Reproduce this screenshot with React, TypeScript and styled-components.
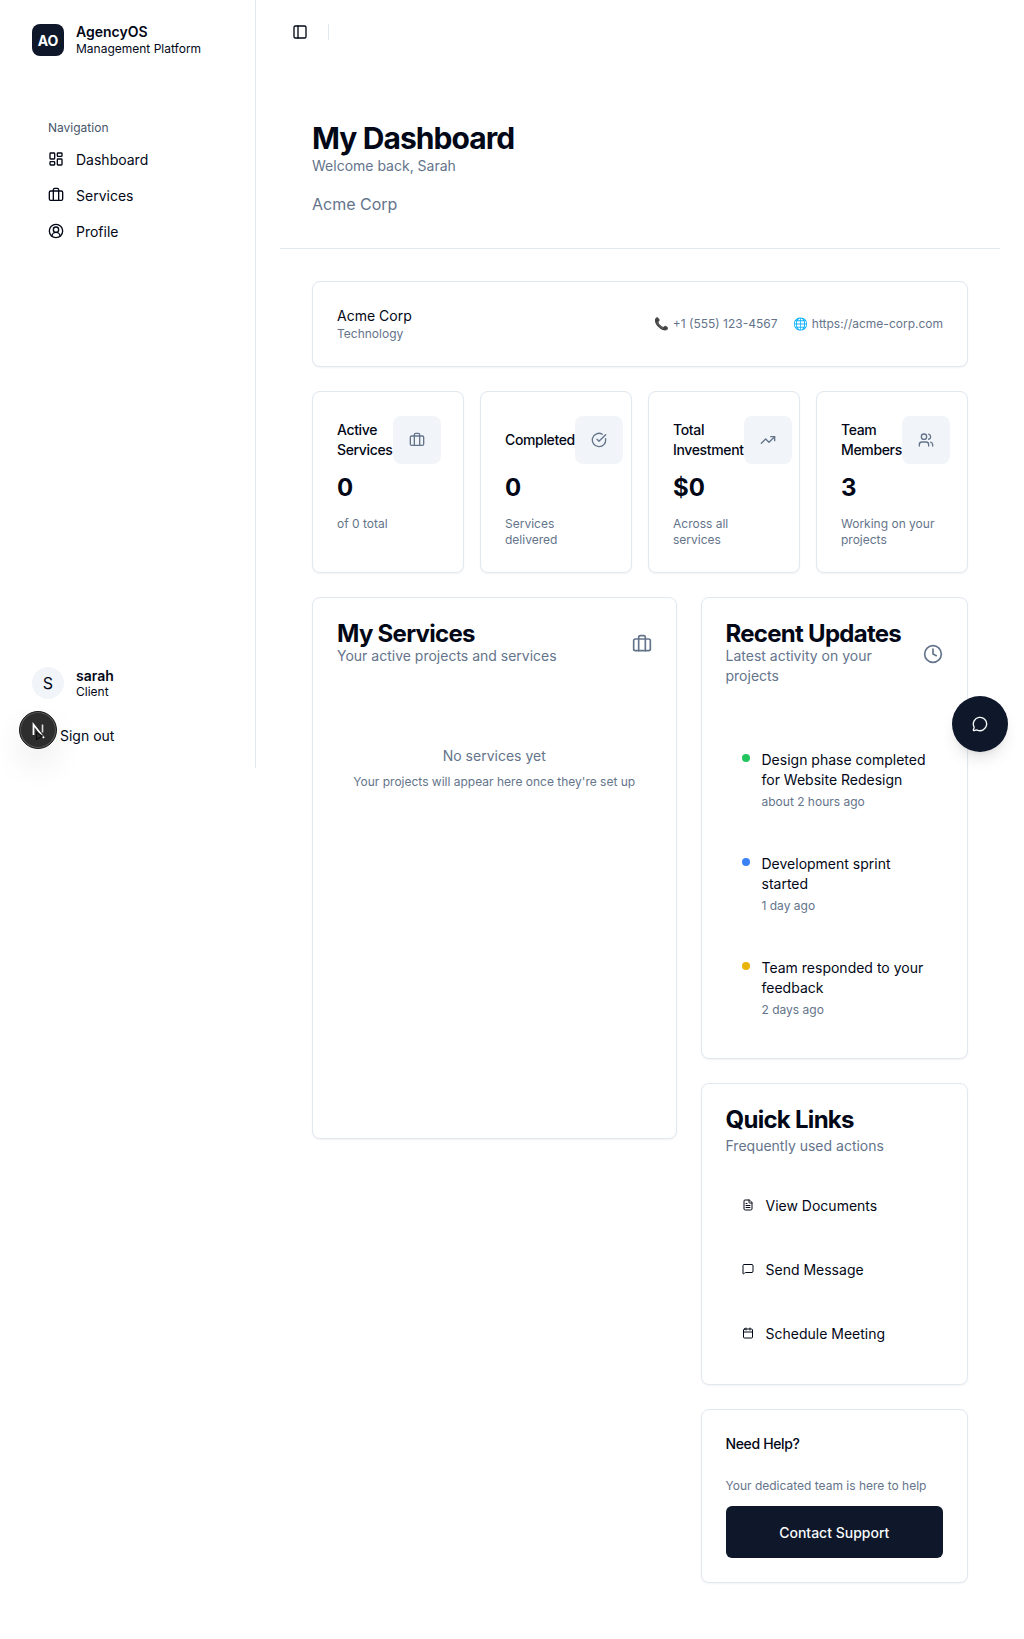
import React from "react";
import styled, { createGlobalStyle } from "styled-components";
import {
  LayoutDashboard,
  Briefcase,
  CircleUserRound,
  PanelLeft,
  CircleCheckBig,
  TrendingUp,
  Users,
  Clock,
  MessageCircle,
  FileText,
  MessageSquare,
  Calendar,
} from "lucide-react";

const GlobalStyle = createGlobalStyle`
  * { box-sizing: border-box; }
  html, body { margin: 0; padding: 0; background: #fff; }
  body {
    font-family: Inter, "Liberation Sans", sans-serif;
    color: #020817;
    -webkit-font-smoothing: antialiased;
  }
`;

const Page = styled.div`
  position: relative;
  display: flex;
  width: 1024px;
  min-height: 1639px;
`;

const Sidebar = styled.aside`
  display: flex;
  flex-direction: column;
  flex: 0 0 256px;
  height: 768px;
  border-right: 1px solid #e2e8f0;
`;

const Brand = styled.div`
  display: flex;
  align-items: center;
  gap: 12px;
  padding: 24px 32px;
  height: 80px;
`;

const LogoMark = styled.div`
  display: flex;
  align-items: center;
  justify-content: center;
  width: 32px;
  height: 32px;
  border-radius: 8px;
  background: #0f172a;
  color: #fff;
  font-size: 14px;
  font-weight: 700;
`;

const BrandText = styled.div`
  display: flex;
  flex-direction: column;
`;

const BrandName = styled.div`
  font-size: 14px;
  line-height: 16px;
  font-weight: 600;
`;

const BrandSub = styled.div`
  margin-top: 1px;
  font-size: 12px;
  line-height: 16px;
`;

const NavSection = styled.nav`
  display: flex;
  flex-direction: column;
  padding: 40px 48px 0;
  flex: 1;
`;

const NavLabel = styled.div`
  font-size: 12px;
  line-height: 16px;
  color: #475569;
  margin-bottom: 5px;
`;

const NavItem = styled.a`
  display: flex;
  align-items: center;
  gap: 12px;
  height: 36px;
  font-size: 14px;
  color: #020817;
  svg { width: 16px; height: 16px; }
`;

const UserBlock = styled.div`
  display: flex;
  flex-direction: column;
  padding: 0 32px 22px;
`;

const UserRow = styled.div`
  display: flex;
  align-items: center;
  gap: 12px;
  height: 32px;
`;

const Avatar = styled.div`
  display: flex;
  align-items: center;
  justify-content: center;
  width: 32px;
  height: 32px;
  border-radius: 50%;
  background: #f1f5f9;
  font-size: 16px;
`;

const UserName = styled.div`
  font-size: 14px;
  line-height: 16px;
  font-weight: 600;
`;

const UserRole = styled.div`
  font-size: 12px;
  line-height: 15px;
`;

const SignOut = styled.div`
  font-size: 14px;
  line-height: 20px;
  padding-left: 28px;
  margin-top: 27px;
`;

const Main = styled.main`
  flex: 1;
  min-width: 0;
  padding-right: 24px;
`;

const TopBar = styled.header`
  display: flex;
  align-items: center;
  height: 64px;
  padding-left: 36px;
  svg { width: 16px; height: 16px; }
`;

const TopDivider = styled.div`
  width: 1px;
  height: 16px;
  margin-left: 20px;
  background: #e2e8f0;
`;

const PageHead = styled.div`
  margin-top: 56px;
  margin-left: 24px;
  padding: 0 32px 32px;
  border-bottom: 1px solid #e2e8f0;
`;

const PageTitle = styled.h1`
  margin: 0;
  font-size: 30px;
  line-height: 36px;
  font-weight: 700;
  letter-spacing: -0.92px;
  color: #020817;
`;

const PageSub = styled.p`
  margin: 0;
  font-size: 14px;
  line-height: 20px;
  color: #64748b;
`;

const OrgName = styled.p`
  margin: 16px 0 0;
  font-size: 16px;
  line-height: 24px;
  color: #64748b;
`;

const Content = styled.div`
  display: flex;
  flex-direction: column;
  gap: 24px;
  margin-left: 24px;
  padding: 32px;
`;

const Card = styled.section`
  background: #fff;
  border: 1px solid #e2e8f0;
  border-radius: 8px;
  box-shadow: 0 1px 2px rgba(0, 0, 0, 0.05);
`;

const ClientCard = styled(Card)`
  display: flex;
  align-items: center;
  justify-content: space-between;
  height: 86px;
  padding: 0 24px;
`;

const ClientName = styled.div`
  font-size: 14px;
  line-height: 20px;
  font-weight: 400;
`;

const ClientIndustry = styled.div`
  font-size: 12px;
  line-height: 16px;
  color: #64748b;
`;

const Contacts = styled.div`
  display: flex;
  align-items: center;
  gap: 16px;
  font-size: 12px;
  line-height: 16px;
  color: #64748b;
`;

const StatGrid = styled.div`
  display: grid;
  grid-template-columns: repeat(4, 152px);
  gap: 16px;
`;

const StatCard = styled(Card)`
  height: 182px;
  padding: 24px;
`;

const StatHead = styled.div`
  display: flex;
  align-items: center;
  justify-content: space-between;
  height: 48px;
`;

const StatLabel = styled.div`
  font-size: 14px;
  line-height: 20px;
  font-weight: 500;
  letter-spacing: -0.35px;
  min-width: min-content;
`;

const StatIcon = styled.div`
  display: flex;
  flex: 0 0 48px;
  align-items: center;
  justify-content: center;
  width: 48px;
  height: 48px;
  border-radius: 8px;
  background: #f1f5f9;
  color: #64748b;
  svg { width: 16px; height: 16px; }
`;

const StatValue = styled.div`
  margin-top: 8px;
  font-size: 24px;
  line-height: 32px;
  font-weight: 700;
`;

const StatNote = styled.div`
  margin-top: 12px;
  font-size: 12px;
  line-height: 16px;
  color: #64748b;
`;

const Columns = styled.div`
  display: grid;
  grid-template-columns: 364.5px 267.5px;
  gap: 24px;
  align-items: start;
`;

const SideColumn = styled.div`
  display: flex;
  flex-direction: column;
  gap: 24px;
`;

const ServicesCard = styled(Card)`
  height: 542px;
  padding: 24px;
`;

const PanelHead = styled.div`
  display: flex;
  align-items: center;
  justify-content: space-between;
`;

const PanelTitle = styled.h2`
  margin: 0;
  font-size: 24px;
  line-height: 24px;
  font-weight: 700;
  letter-spacing: -0.72px;
`;

const PanelSub = styled.p`
  margin: 0;
  font-size: 14px;
  line-height: 20px;
  color: #64748b;
`;

const QuickSub = styled(PanelSub)`
  margin-top: 4px;
`;

const HeadIcon = styled.div`
  display: flex;
  color: #64748b;
  svg { width: 20px; height: 20px; }
`;

const EmptyState = styled.div`
  margin-top: 80px;
  text-align: center;
`;

const EmptyTitle = styled.div`
  font-size: 14px;
  line-height: 20px;
  color: #64748b;
`;

const EmptyNote = styled.div`
  margin-top: 8px;
  font-size: 12px;
  line-height: 16px;
  color: #64748b;
`;

const PanelCard = styled(Card)`
  padding: 24px;
`;

const Updates = styled.ul`
  list-style: none;
  margin: 48px 0 0;
  padding: 16px;
  display: flex;
  flex-direction: column;
  gap: 44px;
`;

const UpdateItem = styled.li`
  display: flex;
  gap: 12px;
`;

const Dot = styled.span<{ $color: string }>`
  flex: 0 0 8px;
  width: 8px;
  height: 8px;
  margin-top: 4px;
  border-radius: 50%;
  background: ${(p) => p.$color};
`;

const UpdateText = styled.div`
  font-size: 14px;
  line-height: 20px;
`;

const UpdateTime = styled.div`
  margin-top: 4px;
  font-size: 12px;
  line-height: 16px;
  color: #64748b;
`;

const LinkList = styled.div`
  display: flex;
  flex-direction: column;
  gap: 24px;
  margin: 29px 0 7px;
`;

const QuickLink = styled.a`
  display: flex;
  align-items: center;
  gap: 12px;
  height: 40px;
  padding-left: 16px;
  font-size: 14px;
  svg { width: 12px; height: 12px; }
`;

const HelpTitle = styled.div`
  font-size: 14px;
  line-height: 20px;
  font-weight: 500;
  letter-spacing: -0.35px;
`;

const HelpNote = styled.div`
  margin-top: 24px;
  font-size: 12px;
  line-height: 16px;
  color: #64748b;
`;

const ContactButton = styled.button`
  display: block;
  width: 100%;
  height: 52px;
  margin-top: 12px;
  border: 0;
  border-radius: 6px;
  background: #0f172a;
  color: #f8fafc;
  font: 500 14px Inter, sans-serif;
`;

const ChatFab = styled.button`
  position: absolute;
  left: 952px;
  top: 696px;
  display: flex;
  align-items: center;
  justify-content: center;
  width: 56px;
  height: 56px;
  border: 0;
  border-radius: 50%;
  background: #0f172a;
  color: #f8fafc;
  box-shadow: 0 10px 15px -3px rgba(0, 0, 0, 0.1), 0 4px 6px -4px rgba(0, 0, 0, 0.1);
  svg { width: 16px; height: 16px; }
`;

const DevBadge = styled.div`
  position: absolute;
  left: 19px;
  top: 711px;
  display: flex;
  align-items: center;
  justify-content: center;
  width: 38px;
  height: 38px;
  border-radius: 50%;
  background: #2e2e2e;
  border: 1px solid #1a1a1a;
  box-shadow: inset 0 0 0 1px #5a5a5a, 0 16px 32px rgba(0, 0, 0, 0.08);
`;

const stats = [
  { label: "Active Services", value: "0", note: "of 0 total", icon: <Briefcase /> },
  { label: "Completed", value: "0", note: "Services delivered", icon: <CircleCheckBig /> },
  { label: "Total Investment", value: "$0", note: "Across all services", icon: <TrendingUp /> },
  { label: "Team Members", value: "3", note: "Working on your projects", icon: <Users /> },
];

const updates = [
  { color: "#22c55e", text: "Design phase completed for Website Redesign", time: "about 2 hours ago" },
  { color: "#3b82f6", text: "Development sprint started", time: "1 day ago" },
  { color: "#eab308", text: "Team responded to your feedback", time: "2 days ago" },
];

const links = [
  { text: "View Documents", icon: <FileText /> },
  { text: "Send Message", icon: <MessageSquare /> },
  { text: "Schedule Meeting", icon: <Calendar /> },
];

export default function App() {
  return (
    <Page>
      <GlobalStyle />
      <Sidebar>
        <Brand>
          <LogoMark>AO</LogoMark>
          <BrandText>
            <BrandName>AgencyOS</BrandName>
            <BrandSub>Management Platform</BrandSub>
          </BrandText>
        </Brand>
        <NavSection>
          <NavLabel>Navigation</NavLabel>
          <NavItem><LayoutDashboard />Dashboard</NavItem>
          <NavItem><Briefcase />Services</NavItem>
          <NavItem><CircleUserRound />Profile</NavItem>
        </NavSection>
        <UserBlock>
          <UserRow>
            <Avatar>S</Avatar>
            <div>
              <UserName>sarah</UserName>
              <UserRole>Client</UserRole>
            </div>
          </UserRow>
          <SignOut>Sign out</SignOut>
        </UserBlock>
      </Sidebar>
      <Main>
        <TopBar>
          <PanelLeft />
          <TopDivider />
        </TopBar>
        <PageHead>
          <PageTitle>My Dashboard</PageTitle>
          <PageSub>Welcome back, Sarah</PageSub>
          <OrgName>Acme Corp</OrgName>
        </PageHead>
        <Content>
          <ClientCard>
            <div>
              <ClientName>Acme Corp</ClientName>
              <ClientIndustry>Technology</ClientIndustry>
            </div>
            <Contacts>
              <span>📞 +1 (555) 123-4567</span>
              <span>🌐 https://acme-corp.com</span>
            </Contacts>
          </ClientCard>
          <StatGrid>
            {stats.map((s) => (
              <StatCard key={s.label}>
                <StatHead>
                  <StatLabel>{s.label}</StatLabel>
                  <StatIcon>{s.icon}</StatIcon>
                </StatHead>
                <StatValue>{s.value}</StatValue>
                <StatNote>{s.note}</StatNote>
              </StatCard>
            ))}
          </StatGrid>
          <Columns>
            <ServicesCard>
              <PanelHead>
                <div>
                  <PanelTitle>My Services</PanelTitle>
                  <PanelSub>Your active projects and services</PanelSub>
                </div>
                <HeadIcon><Briefcase /></HeadIcon>
              </PanelHead>
              <EmptyState>
                <EmptyTitle>No services yet</EmptyTitle>
                <EmptyNote>Your projects will appear here once they're set up</EmptyNote>
              </EmptyState>
            </ServicesCard>
            <SideColumn>
              <PanelCard>
                <PanelHead>
                  <div>
                    <PanelTitle>Recent Updates</PanelTitle>
                    <PanelSub>Latest activity on your projects</PanelSub>
                  </div>
                  <HeadIcon><Clock /></HeadIcon>
                </PanelHead>
                <Updates>
                  {updates.map((u) => (
                    <UpdateItem key={u.text}>
                      <Dot $color={u.color} />
                      <div>
                        <UpdateText>{u.text}</UpdateText>
                        <UpdateTime>{u.time}</UpdateTime>
                      </div>
                    </UpdateItem>
                  ))}
                </Updates>
              </PanelCard>
              <PanelCard>
                <PanelTitle>Quick Links</PanelTitle>
                <QuickSub>Frequently used actions</QuickSub>
                <LinkList>
                  {links.map((l) => (
                    <QuickLink key={l.text}>{l.icon}{l.text}</QuickLink>
                  ))}
                </LinkList>
              </PanelCard>
              <PanelCard>
                <HelpTitle>Need Help?</HelpTitle>
                <HelpNote>Your dedicated team is here to help</HelpNote>
                <ContactButton>Contact Support</ContactButton>
              </PanelCard>
            </SideColumn>
          </Columns>
        </Content>
      </Main>
      <DevBadge>
        <svg width="22" height="22" viewBox="0 0 22 22" fill="none">
          <path d="M6.5 16V5.5L17 19" stroke="#fff" strokeWidth="1.8" />
          <path d="M15.5 5.5v8" stroke="#ddd" strokeWidth="1.6" />
          <path d="M9.5 13.5v7l6-3.5z" fill="#2e2e2e" stroke="#0c0c0c" strokeWidth="1.1" />
        </svg>
      </DevBadge>
      <ChatFab><MessageCircle /></ChatFab>
    </Page>
  );
}
